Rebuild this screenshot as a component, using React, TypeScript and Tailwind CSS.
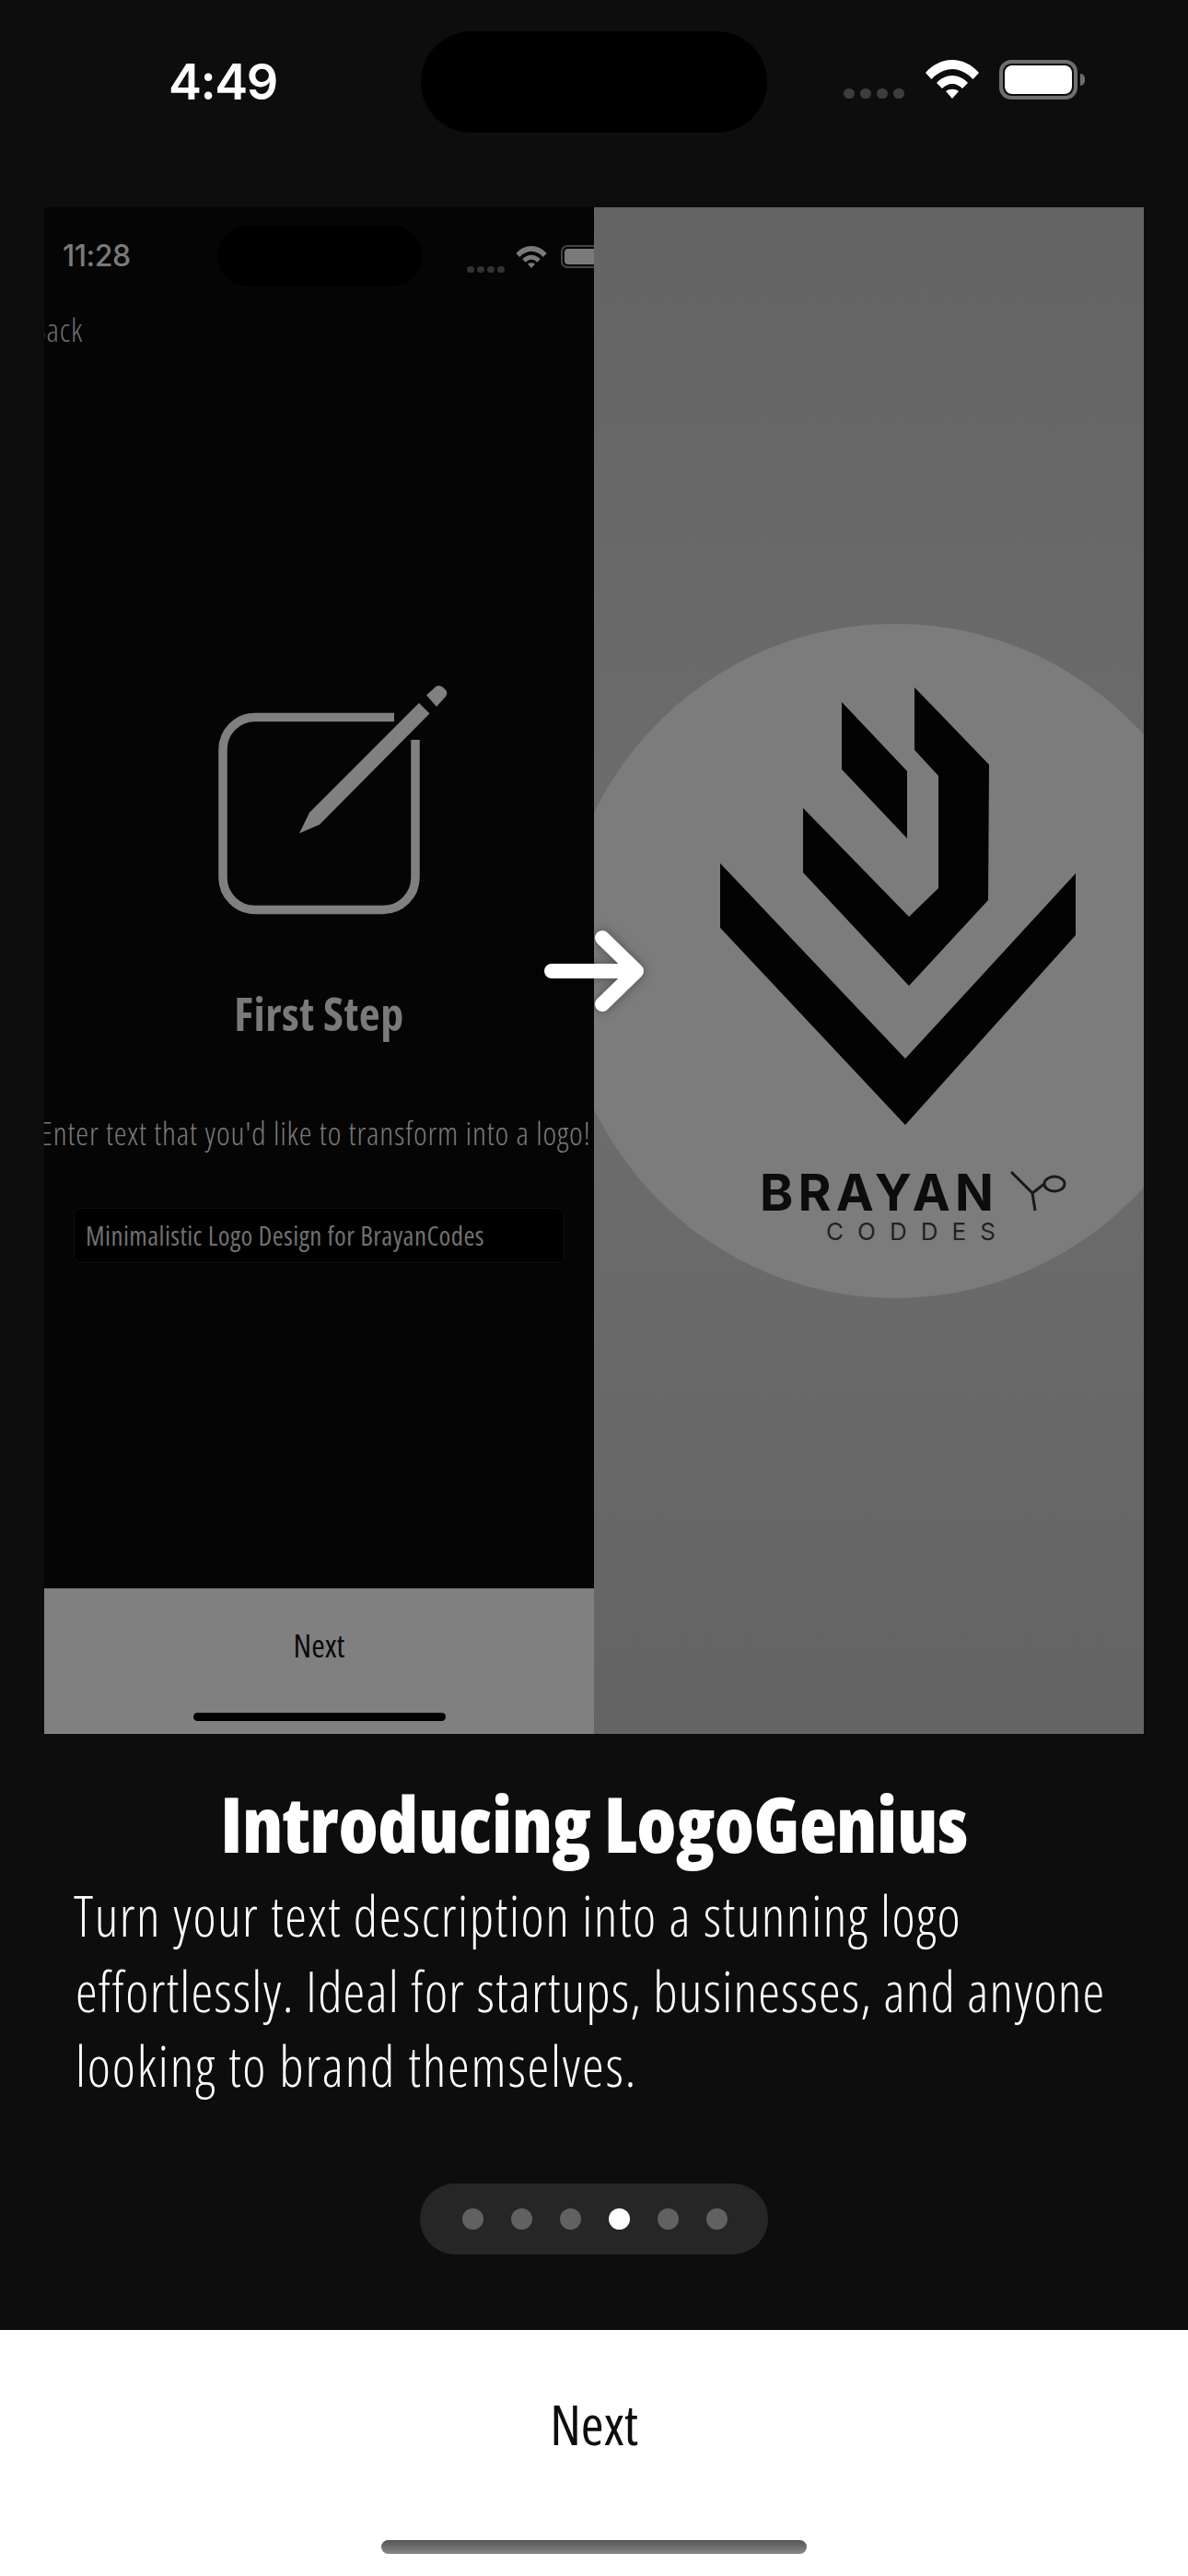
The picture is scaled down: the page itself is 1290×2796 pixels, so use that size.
function Wifi({ className }: { className: string }) {
  return (
    <svg viewBox="0 0 58 42" className={className} fill="currentColor">
      <path d="M0 14C8 5 18 0 29 0s21 5 29 14l-6.500 7C45 14 37 10 29 10s-16 4-22.500 11z" />
      <path d="M12 25c4-5 11-8 17-8s13 3 17 8l-6 6c-3-3-7-5-11-5s-8 2-11 5z" />
      <path d="M22 34c4-3 10-3 14 0l-7 8z" />
    </svg>
  );
}

function LogoImage() {
  return (
    <svg viewBox="645 225 597 1657" className="block h-full w-full">
      <defs>
        <linearGradient id="photo" x1="0" y1="0" x2="0" y2="1">
          <stop offset="0" stopColor="#646464" />
          <stop offset="0.5" stopColor="#6e6e6e" />
          <stop offset="1" stopColor="#646464" />
        </linearGradient>
      </defs>
      <rect x="645" y="225" width="597" height="1657" fill="url(#photo)" />
      <ellipse cx="972" cy="1043" rx="364" ry="366" fill="#7c7c7c" />
      <polygon points="914,762 985,837 985,910 914,835" fill="#030303" />
      <polygon
        points="993,746 1074,830 1073,977 987,1070 872,947 872,877 987,995 1019,964 1019,842 993,814"
        fill="#030303"
      />
      <polygon points="782,937 983,1149 1168,948 1168,1015 983,1221 782,1007" fill="#030303" />
      <text
        x="825"
        y="1314"
        textLength="254"
        fontFamily="Inter, sans-serif"
        fontWeight="700"
        fontSize="55"
        fill="#0c0c0c"
      >
        BRAYAN
      </text>
      <text
        x="897"
        y="1346"
        textLength="184"
        fontFamily="Inter, sans-serif"
        fontWeight="400"
        fontSize="26"
        fill="#222222"
      >
        CODDES
      </text>
      <path d="M1098 1272l23 23 3 19M1121 1295l13-10" fill="none" stroke="#1a1a1a" strokeWidth="3" />
      <ellipse cx="1145" cy="1285" rx="11" ry="8" fill="none" stroke="#1a1a1a" strokeWidth="3" />
    </svg>
  );
}

function FirstStepScreen() {
  return (
    <div className="flex h-full w-full flex-col overflow-hidden bg-[#050505] text-[#7a7a7a]">
      <div className="mt-[20px] flex h-[65px] shrink-0 items-center">
        <div className="w-[188px] shrink-0 pl-[20px] font-['Inter',sans-serif] text-[32px] font-medium leading-none tracking-[-0.5px]">11:28</div>
        <div className="h-[65px] w-[222px] shrink-0 rounded-[32px] bg-black" />
        <div className="ml-[49px] mt-[30px] flex shrink-0 gap-[3px]">
          <span className="h-[7px] w-[8px] rounded-full bg-[#333333]" />
          <span className="h-[7px] w-[8px] rounded-full bg-[#333333]" />
          <span className="h-[7px] w-[8px] rounded-full bg-[#333333]" />
          <span className="h-[7px] w-[8px] rounded-full bg-[#333333]" />
        </div>
        <Wifi className="ml-[12px] mt-[2px] h-[24px] w-[34px] shrink-0 text-[#7a7a7a]" />
        <div className="ml-[15px] mt-[2px] h-[25px] w-[48px] shrink-0 rounded-[7px] border-2 border-[#444444] p-[2px]">
          <div className="h-full w-full rounded-[4px] bg-[#7a7a7a]" />
        </div>
      </div>
      <div className="mt-[28px] -ml-[14px] font-['Open_Sans',sans-serif] text-[35px] font-light leading-[40px] tracking-[0.8px] text-[#6e6e6e] [font-stretch:75%]">Back</div>

      <div className="mx-auto mt-[396px] h-[219px] w-[219px] shrink-0">
        <svg viewBox="237 774 219 219" className="h-full w-full overflow-visible" fill="#808080">
          <path
            d="M428 778.500H277a35 35 0 0 0-35 35V952.500a35 35 0 0 0 35 35H416a35 35 0 0 0 35-35V803"
            fill="none"
            stroke="#808080"
            strokeWidth="9.500"
          />
          <path d="M325 904.500L336 882 455 763 466.500 774.500 347 895z" />
          <path d="M463 754.500L473 745.500Q477 743 481 746L484 749Q486.500 752 484 756L474 767z" />
        </svg>
      </div>

      <div className="mt-[82px] whitespace-nowrap text-center font-['Open_Sans',sans-serif] text-[50px] font-bold leading-none tracking-[0.5px] [font-stretch:75%]">First Step</div>
      <div className="-ml-[8px] mt-[87px] flex justify-center whitespace-nowrap font-['Open_Sans',sans-serif] text-[35px] font-light leading-none tracking-[0.85px] [font-stretch:75%]">Enter text that you'd like to transform into a logo!</div>
      <div className="mx-[32px] mt-[64px] flex h-[60px] shrink-0 items-center whitespace-nowrap rounded-[8px] border border-[#101010] bg-black pl-[12px] font-['Open_Sans',sans-serif] text-[29px] tracking-[0.4px] text-[#707070] [font-stretch:75%]">
        Minimalistic Logo Design for BrayanCodes
      </div>

      <div className="mt-auto flex h-[158px] shrink-0 flex-col items-center bg-[#808080] text-[#0a0a0a]">
        <div className="mt-[44px] font-['Open_Sans',sans-serif] text-[35px] leading-none [font-stretch:75%]">Next</div>
        <div className="mt-auto mb-[14px] h-[9px] w-[274px] rounded-full bg-black" />
      </div>
    </div>
  );
}

export default function App() {
  return (
    <div className="flex h-[2796px] w-[1290px] flex-col overflow-hidden bg-[#0d0d0d] text-white">
      <div className="flex h-[225px] shrink-0 pt-[34px]">
        <div className="w-[457px] shrink-0 pl-[183px] pt-[24px] font-['Inter',sans-serif] text-[54px] font-semibold leading-[62px] tracking-[-1.500px]">4:49</div>
        <div className="h-[110px] w-[376px] shrink-0 rounded-[55px] bg-black" />
        <div className="ml-[83px] flex h-[110px] items-start pt-[31px]">
          <div className="mt-[31px] flex gap-[6px]">
            <span className="h-[11px] w-[12px] rounded-full bg-[#3d3d3d]" />
            <span className="h-[11px] w-[12px] rounded-full bg-[#3d3d3d]" />
            <span className="h-[11px] w-[12px] rounded-full bg-[#3d3d3d]" />
            <span className="h-[11px] w-[12px] rounded-full bg-[#3d3d3d]" />
          </div>
          <Wifi className="ml-[23px] h-[42px] w-[58px] shrink-0 text-white" />
          <div className="ml-[22px] h-[43px] w-[85px] shrink-0 rounded-[13px] border-[4px] border-[#6e6e6e] p-[2px]">
            <div className="h-full w-full rounded-[8px] bg-white" />
          </div>
          <div className="ml-[3px] mt-[15px] h-[13px] w-[5px] rounded-r-full bg-[#6e6e6e]" />
        </div>
      </div>

      <div className="relative mx-[48px] flex h-[1657px] shrink-0">
        <div className="w-[597px] shrink-0">
          <FirstStepScreen />
        </div>
        <div className="w-[597px] shrink-0">
          <LogoImage />
        </div>
        <svg
          viewBox="590 1010 112 88"
          className="absolute left-[542px] top-[785px] h-[88px] w-[112px] drop-shadow-[0_0_6px_rgba(0,0,0,0.35)]"
          fill="none"
          stroke="#ffffff"
          strokeWidth="16"
          strokeLinecap="round"
          strokeLinejoin="round"
        >
          <path d="M599 1054H688M654 1018L691 1054 654 1090" />
        </svg>
      </div>

      <h1 className="mt-[55px] whitespace-nowrap text-center font-['Open_Sans',sans-serif] text-[84px] font-extrabold leading-none tracking-[-0.4px] [font-stretch:75%]">Introducing LogoGenius</h1>
      <p className="mt-[18px] whitespace-nowrap pl-[80px] font-['Open_Sans',sans-serif] text-[60px] font-light leading-[81.500px] [font-stretch:75%]">
        <span className="block tracking-[1.500px]">Turn your text description into a stunning logo</span>
        <span className="block pl-[2px] tracking-[1.150px]">effortlessly. Ideal for startups, businesses, and anyone</span>
        <span className="block pl-[2px] tracking-[1.800px]">looking to brand themselves.</span>
      </p>

      <div className="mx-auto mt-[86px] flex h-[77px] w-[378px] items-center justify-center gap-[30px] rounded-[38px] bg-[#262626] pl-[2px]">
        <span className="h-[23px] w-[23px] rounded-full bg-[#616161]" />
        <span className="h-[23px] w-[23px] rounded-full bg-[#616161]" />
        <span className="h-[23px] w-[23px] rounded-full bg-[#616161]" />
        <span className="h-[23px] w-[23px] rounded-full bg-white" />
        <span className="h-[23px] w-[23px] rounded-full bg-[#616161]" />
        <span className="h-[23px] w-[23px] rounded-full bg-[#616161]" />
      </div>

      <div className="mt-auto flex h-[267px] shrink-0 flex-col items-center bg-white text-[#0d0d0d]">
        <div className="mt-[62px] font-['Open_Sans',sans-serif] text-[60px] font-normal leading-[80px] [font-stretch:75%]">Next</div>
        <div className="mt-auto mb-[24px] h-[15px] w-[462px] rounded-full bg-gradient-to-b from-[#555555] to-[#888888]" />
      </div>
    </div>
  );
}
